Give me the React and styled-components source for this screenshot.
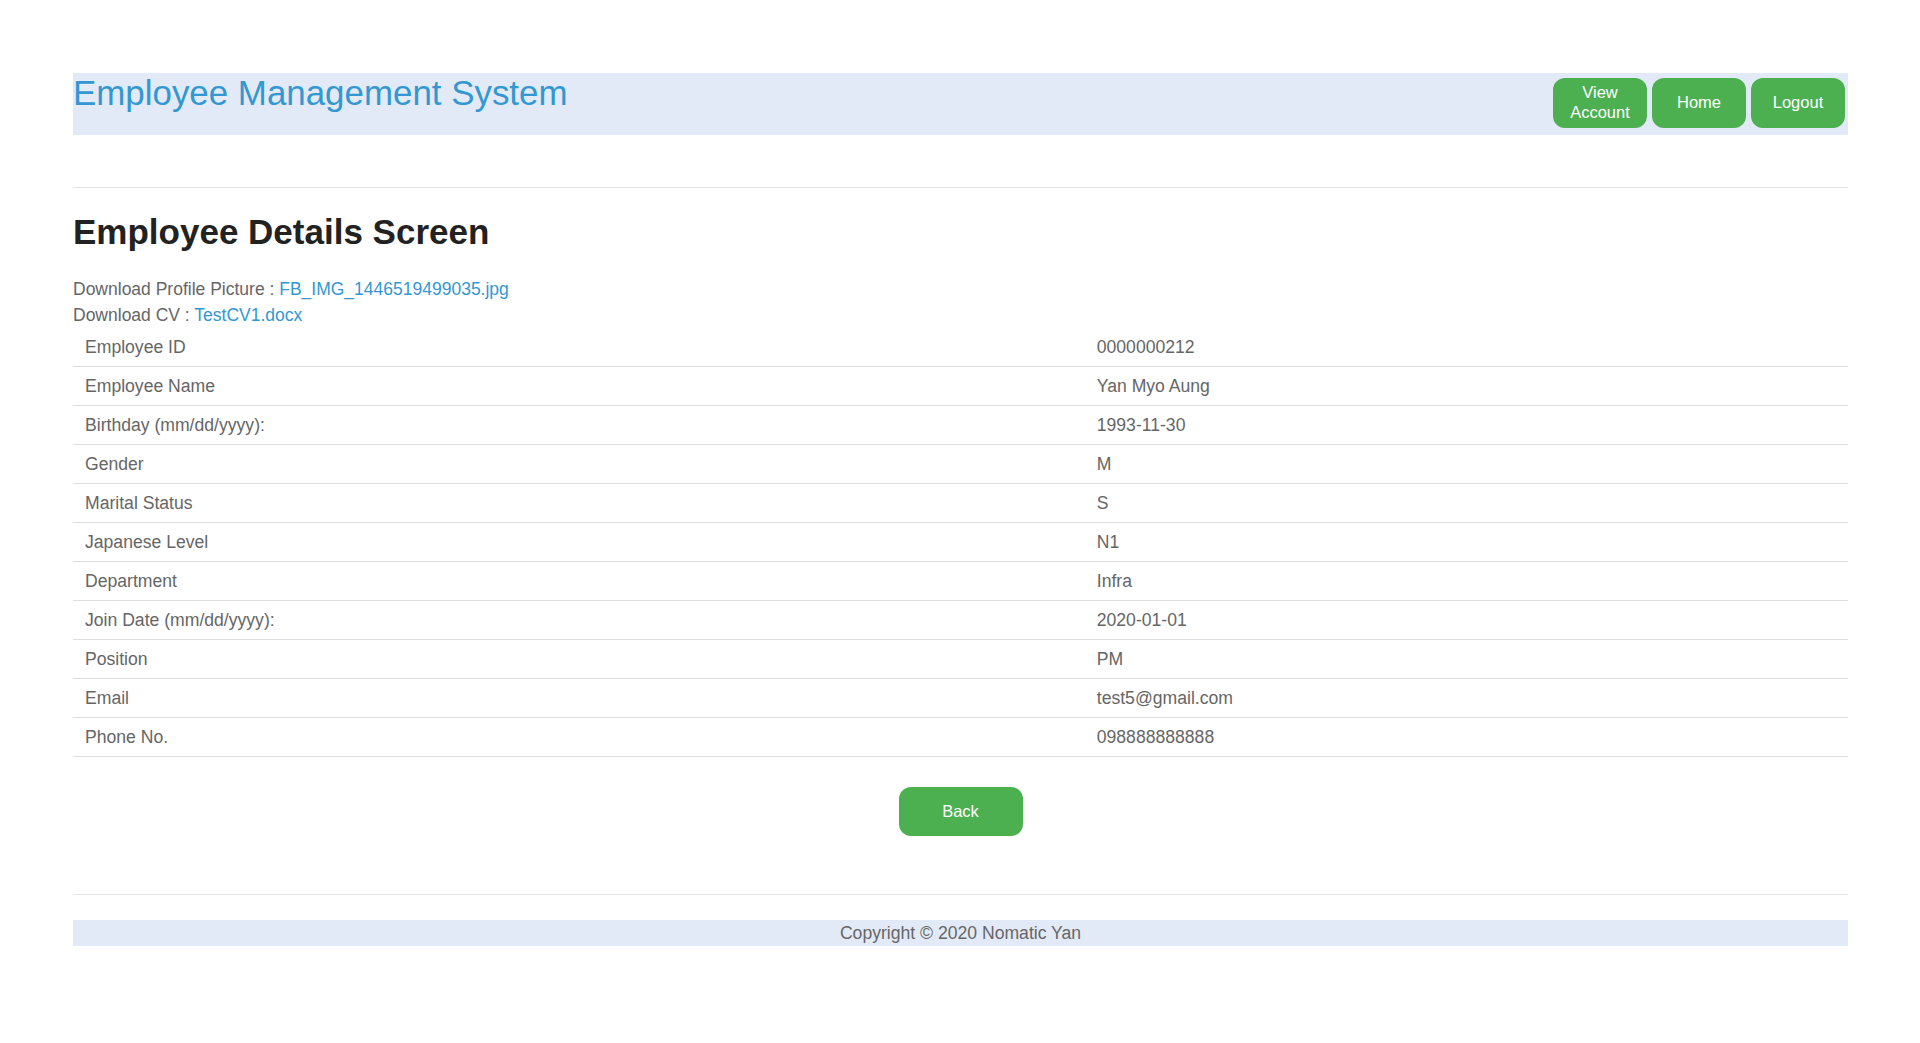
import React from 'react';
import styled, { createGlobalStyle } from 'styled-components';

const GlobalStyle = createGlobalStyle`
  html, body {
    margin: 0;
    padding: 0;
    background: #fff;
    font-family: "Liberation Sans", Arial, Helvetica, sans-serif;
    color: #666;
  }
`;

const Page = styled.div`
  padding: 73px 72px 80px 73px;
`;

const Header = styled.header`
  display: flex;
  justify-content: space-between;
  align-items: flex-start;
  height: 62px;
  background: #e3eaf7;
`;

const SiteTitle = styled.h1`
  margin: 0;
  font-size: 34.9px;
  font-weight: normal;
  line-height: 1.15;
  color: #3398d1;
`;

const Nav = styled.nav`
  display: flex;
  gap: 5px;
  margin: 5px 3px 0 0;
`;

const GreenButton = styled.button`
  display: flex;
  align-items: center;
  justify-content: center;
  width: ${p => p.$w || 94}px;
  height: ${p => p.$h || 50}px;
  padding: 0 6px 2px;
  border: none;
  border-radius: 12px;
  background: #4caf50;
  color: #fff;
  font-family: inherit;
  font-size: 16.5px;
  line-height: 20px;
  text-align: center;
  cursor: pointer;
`;

const Rule = styled.hr`
  margin: ${p => p.$top}px 0 0;
  border: none;
  border-top: 1px solid #e3e3e3;
  height: 0;
`;

const Heading = styled.h2`
  margin: 24px 0 24px;
  font-size: 35px;
  font-weight: bold;
  line-height: 1.15;
  color: #222;
`;

const DownloadLine = styled.div`
  font-size: 17.5px;
  line-height: 26px;
  color: #666;
`;

const FileLink = styled.a`
  color: #3398d1;
  text-decoration: none;
`;

const DetailTable = styled.div`
  display: grid;
  grid-template-columns: 57fr 43fr;
`;

const Cell = styled.div`
  padding: 6px 12px;
  font-size: 17.6px;
  line-height: 26px;
  color: #666;
  border-bottom: 1px solid #dedede;
`;

const Actions = styled.div`
  display: flex;
  justify-content: center;
  margin-top: 30px;
`;

const Footer = styled.footer`
  margin-top: 25px;
  height: 26px;
  background: #e3eaf7;
  text-align: center;
  font-size: 17.6px;
  line-height: 26px;
  color: #666;
`;

const details = [
  ['Employee ID', '0000000212'],
  ['Employee Name', 'Yan Myo Aung'],
  ['Birthday (mm/dd/yyyy):', '1993-11-30'],
  ['Gender', 'M'],
  ['Marital Status', 'S'],
  ['Japanese Level', 'N1'],
  ['Department', 'Infra'],
  ['Join Date (mm/dd/yyyy):', '2020-01-01'],
  ['Position', 'PM'],
  ['Email', 'test5@gmail.com'],
  ['Phone No.', '098888888888'],
];

const App = () => {
  return (
    <>
      <GlobalStyle />
      <Page>
        <Header>
          <SiteTitle>Employee Management System</SiteTitle>
          <Nav>
            <GreenButton>View Account</GreenButton>
            <GreenButton>Home</GreenButton>
            <GreenButton>Logout</GreenButton>
          </Nav>
        </Header>

        <Rule $top={52} />

        <Heading>Employee Details Screen</Heading>

        <DownloadLine>
          Download Profile Picture : <FileLink href="#">FB_IMG_1446519499035.jpg</FileLink>
        </DownloadLine>
        <DownloadLine>
          Download CV : <FileLink href="#">TestCV1.docx</FileLink>
        </DownloadLine>

        <DetailTable>
          {details.map(([label, value]) => (
            <React.Fragment key={label}>
              <Cell>{label}</Cell>
              <Cell>{value}</Cell>
            </React.Fragment>
          ))}
        </DetailTable>

        <Actions>
          <GreenButton $w={124} $h={49}>Back</GreenButton>
        </Actions>

        <Rule $top={58} />

        <Footer>Copyright © 2020 Nomatic Yan</Footer>
      </Page>
    </>
  );
};

export default App;
